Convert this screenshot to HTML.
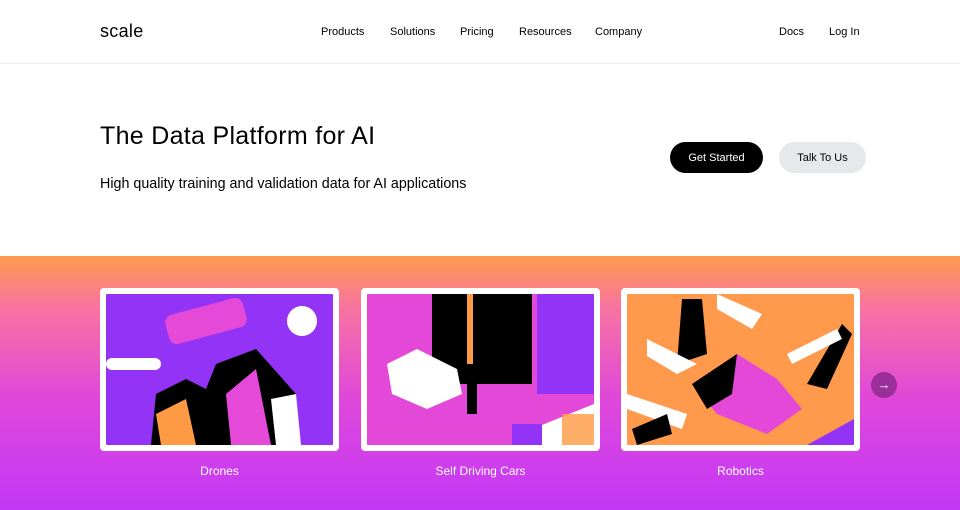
<!DOCTYPE html>
<html><head><style>
*{margin:0;padding:0;box-sizing:border-box}
body{width:960px;height:510px;overflow:hidden;background:#fff;font-family:"Liberation Sans",sans-serif;color:#000;position:relative}
.a{position:absolute}
.nav{font-size:11px;top:26px}
.hero{top:256px;left:0;width:960px;height:254px;background:linear-gradient(#ff9a4c 0%,#f874a0 20%,#e048d8 55%,#c338f8 100%)}
.card{position:absolute;top:32px;width:239px;height:163px;background:#fff;border-radius:4px;padding:6px;overflow:hidden}
.card .in{width:100%;height:100%;position:relative;overflow:hidden;border-radius:1px}
.lbl{position:absolute;top:208px;color:#fff;font-size:12px;text-align:center;width:239px}
</style></head><body>
<div class="a" style="left:100px;top:21px;font-size:18px;letter-spacing:0.3px">scale</div>
<div class="a nav" style="left:321px">Products</div>
<div class="a nav" style="left:390px">Solutions</div>
<div class="a nav" style="left:460px">Pricing</div>
<div class="a nav" style="left:519px">Resources</div>
<div class="a nav" style="left:595px">Company</div>
<div class="a nav" style="left:779px">Docs</div>
<div class="a nav" style="left:829px">Log In</div>
<div class="a" style="top:63px;left:0;width:960px;height:1px;background:#eee"></div>
<div class="a" style="left:100px;top:122px;font-size:25px;letter-spacing:0.3px">The Data Platform for AI</div>
<div class="a" style="left:100px;top:176px;font-size:14.3px">High quality training and validation data for AI applications</div>
<div class="a" style="left:670px;top:142px;width:93px;height:31px;border-radius:16px;background:#000;color:#fff;font-size:11px;line-height:32px;text-align:center">Get Started</div>
<div class="a" style="left:779px;top:142px;width:87px;height:31px;border-radius:16px;background:#e6e8ec;font-size:11px;line-height:32px;text-align:center">Talk To Us</div>
<div class="a hero">
<div class="card" style="left:100px"><div class="in" style="background:#9333f5">
<svg width="227" height="151"><circle cx="196" cy="27" r="15" fill="#fff"/><rect x="0" y="64" width="55" height="12" rx="6" fill="#fff"/><rect x="60" y="12" width="80" height="30" rx="8" fill="#e549d8" transform="rotate(-15 100 27)"/>
<polygon points="45,151 50,100 80,85 100,95 110,70 150,55 190,100 190,151" fill="#000"/><polygon points="50,120 80,105 90,151 55,151" fill="#ff9a44"/><polygon points="120,100 150,75 165,151 125,151" fill="#e549d8"/><polygon points="165,105 190,100 195,151 170,151" fill="#fff"/></svg></div></div>
<div class="lbl" style="left:100px">Drones</div>
<div class="card" style="left:361px"><div class="in" style="background:#e448d9">
<svg width="227" height="151"><rect x="65" y="0" width="100" height="90" fill="#000"/><rect x="100" y="0" width="6" height="70" fill="#ff9a44"/><rect x="170" y="0" width="57" height="100" fill="#9333f5"/><polygon points="20,70 50,55 90,75 95,100 60,115 25,100" fill="#fff"/><polygon points="165,135 227,110 227,151 165,151" fill="#fff"/><rect x="195" y="120" width="32" height="31" fill="#ff9a44" opacity=".8"/><rect x="145" y="130" width="30" height="21" fill="#9333f5"/><rect x="100" y="90" width="10" height="30" fill="#000"/></svg></div></div>
<div class="lbl" style="left:361px">Self Driving Cars</div>
<div class="card" style="left:621px"><div class="in" style="background:#ff9a4c">
<svg width="227" height="151"><polygon points="55,5 75,5 80,60 50,70" fill="#000"/><polygon points="20,45 70,70 50,80 20,62" fill="#fff"/><polygon points="90,0 135,20 125,35 90,15" fill="#fff"/><polygon points="65,90 110,60 150,85 175,115 140,140 90,120" fill="#e448d9"/><polygon points="65,90 110,60 105,100 80,115" fill="#000"/><polygon points="180,90 215,30 225,40 200,95" fill="#000"/><polygon points="160,60 210,35 215,45 165,70" fill="#fff"/><polygon points="0,100 60,120 55,135 0,115" fill="#fff"/><polygon points="5,135 40,120 45,140 10,151" fill="#000"/><polygon points="180,151 227,125 227,151" fill="#9333f5"/></svg></div></div>
<div class="lbl" style="left:621px">Robotics</div>
<div class="a" style="left:871px;top:116px;width:26px;height:26px;border-radius:50%;background:#9a2f9a;color:#fff;font-size:13px;line-height:26px;text-align:center">→</div>
</div>
</body></html>
